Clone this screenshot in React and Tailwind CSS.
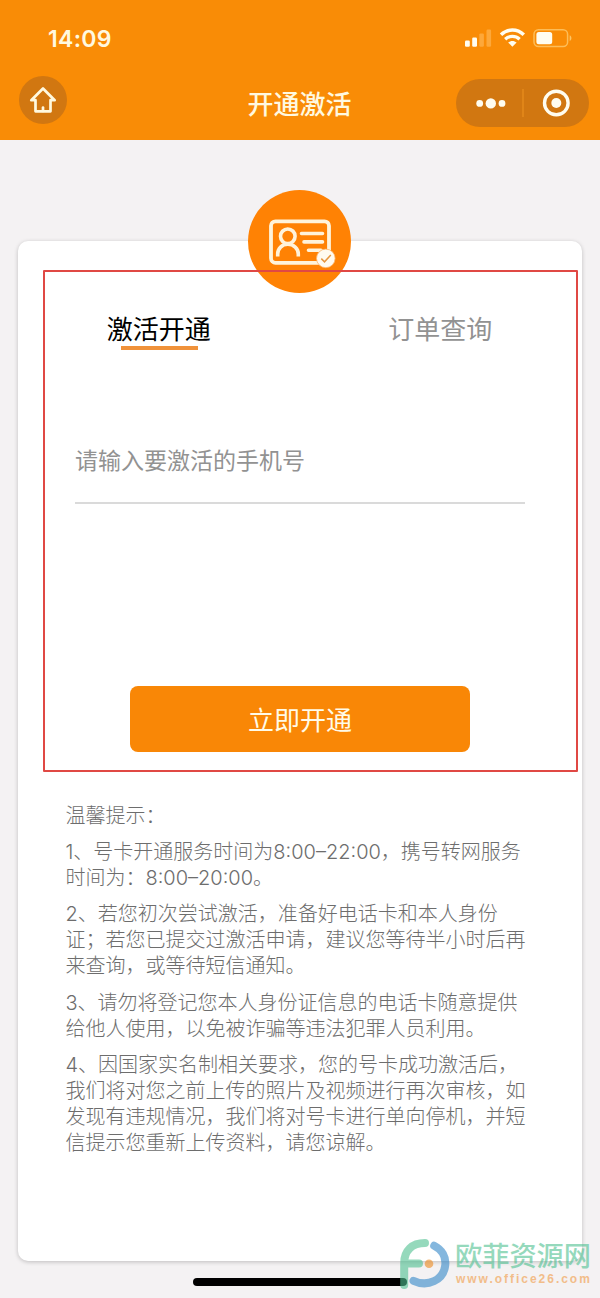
const tips = [
  ["温馨提示："],
  ["1、号卡开通服务时间为8:00–22:00，携号转网服务", "时间为：8:00–20:00。"],
  ["2、若您初次尝试激活，准备好电话卡和本人身份", "证；若您已提交过激活申请，建议您等待半小时后再", "来查询，或等待短信通知。"],
  ["3、请勿将登记您本人身份证信息的电话卡随意提供", "给他人使用，以免被诈骗等违法犯罪人员利用。"],
  ["4、因国家实名制相关要求，您的号卡成功激活后，", "我们将对您之前上传的照片及视频进行再次审核，如", "发现有违规情况，我们将对号卡进行单向停机，并短", "信提示您重新上传资料，请您谅解。"],
];

function StatusIcons() {
  return (
    <svg className="h-6 w-[112px]" viewBox="0 0 112 24" fill="none">
      <rect x="1" y="14.5" width="4.8" height="6.2" rx="1.2" fill="#fffdf0" />
      <rect x="8.2" y="11.5" width="4.8" height="9.2" rx="1.2" fill="#fffdf0" />
      <rect x="15.3" y="7.5" width="4.6" height="13.2" rx="1.2" fill="#fda83a" />
      <rect x="22.5" y="3.5" width="4.6" height="17.2" rx="1.2" fill="#fda83a" />
      <path d="M37 8.7C43.6 2.4 53.2 2.4 59.8 8.7" stroke="#fffdf0" strokeWidth="3.5" />
      <path d="M41.2 13.2C45.2 9.4 51.6 9.4 55.6 13.2" stroke="#fffdf0" strokeWidth="3.3" />
      <path d="M44.2 16.6C46.6 14.4 50.2 14.4 52.6 16.6L48.4 20.8Z" fill="#fffdf0" />
      <rect x="70" y="3.7" width="33.6" height="16.8" rx="4.5" stroke="#fdbd58" strokeWidth="1.5" />
      <rect x="72.4" y="6" width="15.8" height="12.2" rx="2.5" fill="#fffdf0" />
      <path d="M105.7 9.2C108 10.2 108 14 105.7 15Z" fill="#fdc565" />
    </svg>
  );
}

function CardBadge() {
  return (
    <svg className="size-[103px]" viewBox="0 0 103 103" fill="none">
      <circle cx="51.5" cy="51.5" r="51.5" fill="#ff8204" />
      <rect x="23" y="31.3" width="58" height="41.5" rx="4.5" stroke="#fff3da" strokeWidth="3.8" />
      <circle cx="39.8" cy="46.3" r="7.3" stroke="#fff3da" strokeWidth="3.6" />
      <path d="M29.7 66.5V64C29.7 58.5 34 54.3 39.8 54.3S50.3 58.5 50.3 64V66.5" stroke="#fff3da" strokeWidth="3.6" />
      <path d="M53.5 43.5H74.5M56 51.9H74.5M60.5 60.2H73" stroke="#fff3da" strokeWidth="3.6" strokeLinecap="round" />
      <circle cx="77.8" cy="68.4" r="9.3" fill="#fffaf0" stroke="#fbb46a" strokeWidth="0.8" />
      <path d="M73.3 68.6L76.5 71.8L82.8 65" stroke="#e6953f" strokeWidth="1.5" />
    </svg>
  );
}

function Watermark() {
  return (
    <div className="absolute top-[1237px] left-[399px] flex opacity-60">
      <svg className="h-[54px] w-[52px]" viewBox="0 0 52 54" fill="none" strokeLinecap="round" strokeWidth="8">
        <path d="M26 6C13 6 5.2 13.5 5.2 26V48M5.2 26.5H20" stroke="#4fc191" />
        <path d="M35.2 8.8C43 12.8 47.3 20 46.2 28.5C44.4 43.5 28.5 50.3 14.5 43.8" stroke="#3488c9" />
        <circle cx="30" cy="26.7" r="4.3" fill="#ee8b20" />
      </svg>
      <div className="pt-[6px] pl-[4px]">
        <div className="text-[27.2px] leading-[28px] font-medium text-[#4fc191] whitespace-nowrap">欧菲资源网</div>
        <div className="pl-[1px] font-['Liberation_Sans'] text-[12px] leading-[16px] font-bold tracking-[1.97px] text-[#f29a43] whitespace-nowrap">www.office26.com</div>
      </div>
    </div>
  );
}

export default function App() {
  return (
    <div className="relative flex h-[1298px] w-[600px] flex-col overflow-hidden bg-[#f4f2f3] font-['Inter','Noto_Sans_CJK_SC',sans-serif]">
      <header className="h-[140px] shrink-0 bg-[#f98c06] text-[#fff9e0]">
        <div className="flex h-[76px] items-center justify-between pr-[24px] pl-[48px]">
          <span className="pt-[2px] text-[23px] font-semibold tracking-[0.3px]">14:09</span>
          <StatusIcons />
        </div>
        <div className="grid h-[54px] grid-cols-[1fr_120px_1fr] items-center pr-[11px] pl-[19px]">
          <div className="-mt-[6px] flex size-[48px] items-center justify-center rounded-full bg-[#d17711]">
            <svg className="size-[28px]" viewBox="0 0 28 28" fill="none" stroke="#fff9df" strokeWidth="2.7" strokeLinejoin="round" strokeLinecap="round">
              <path d="M14 2.5L2.3 14.2H6.5V25.3H21.5V14.2H25.7Z" />
              <path d="M14 25V21.5" />
            </svg>
          </div>
          <h1 className="-ml-[9px] pt-[4px] text-center text-[26px] leading-[50px] font-medium whitespace-nowrap">开通激活</h1>
          <div className="flex h-[48px] w-[133px] items-center justify-self-end rounded-full bg-[#d17711]">
            <svg className="h-[48px] w-[133px]" viewBox="0 0 133 48" fill="#fffdf0">
              <circle cx="23.7" cy="24.4" r="3.4" />
              <circle cx="34.8" cy="24.4" r="5.2" />
              <circle cx="46" cy="24.4" r="3.4" />
              <path d="M67 10V38" stroke="#e48a1b" strokeWidth="1.5" />
              <circle cx="100.3" cy="24" r="11.8" fill="none" stroke="#fffdf0" strokeWidth="3.4" />
              <circle cx="100.3" cy="24" r="5" />
            </svg>
          </div>
        </div>
      </header>

      <main className="mt-[101px] ml-[18px] flex h-[1020px] w-[564px] shrink-0 flex-col rounded-[10px] bg-white shadow-[0_1px_4px_rgba(0,0,0,0.22)]">
        <div className="-mt-[51px] flex h-[103px] justify-center pr-[1px]">
          <CardBadge />
        </div>
        <nav className="mt-[17px] flex h-[40px] pr-[1px] text-[26px] leading-[40px]">
          <div className="flex w-1/2 flex-col items-center">
            <span className="text-black">激活开通</span>
            <span className="-mt-[4px] ml-[1px] h-[4px] w-[77px] shrink-0 bg-[#f0923a]" />
          </div>
          <div className="w-1/2 text-center text-[#929292]">订单查询</div>
        </nav>
        <div className="mx-[57px] mt-[86px] h-[68px] border-b-2 border-[#dadada]">
          <input
            aria-label="手机号"
            className="h-[49px] w-full text-[23px] outline-none placeholder:text-[#929292]"
            placeholder="请输入要激活的手机号"
          />
        </div>
        <button className="mt-[182px] ml-[112px] h-[66px] w-[340px] rounded-[8px] bg-[#f98706] pt-[2px] text-[26px] text-[#fffbe8]">立即开通</button>
        <section className="mt-[51px] ml-[47.5px] flex flex-col gap-[10px] text-[20px] leading-[26.1px] font-light text-[#6d6d6d]">
          {tips.map((lines) => (
            <p key={lines[0]}>
              {lines.map((line) => (
                <span key={line} className="block whitespace-nowrap">{line}</span>
              ))}
            </p>
          ))}
        </section>
      </main>

      <div className="mt-[17px] ml-[193px] h-[8px] w-[214px] shrink-0 rounded-full bg-black" />
      <div className="absolute top-[270px] left-[43px] h-[502px] w-[535px] rounded-[1px] border-2 border-[#e04844]" />
      <Watermark />
    </div>
  );
}
